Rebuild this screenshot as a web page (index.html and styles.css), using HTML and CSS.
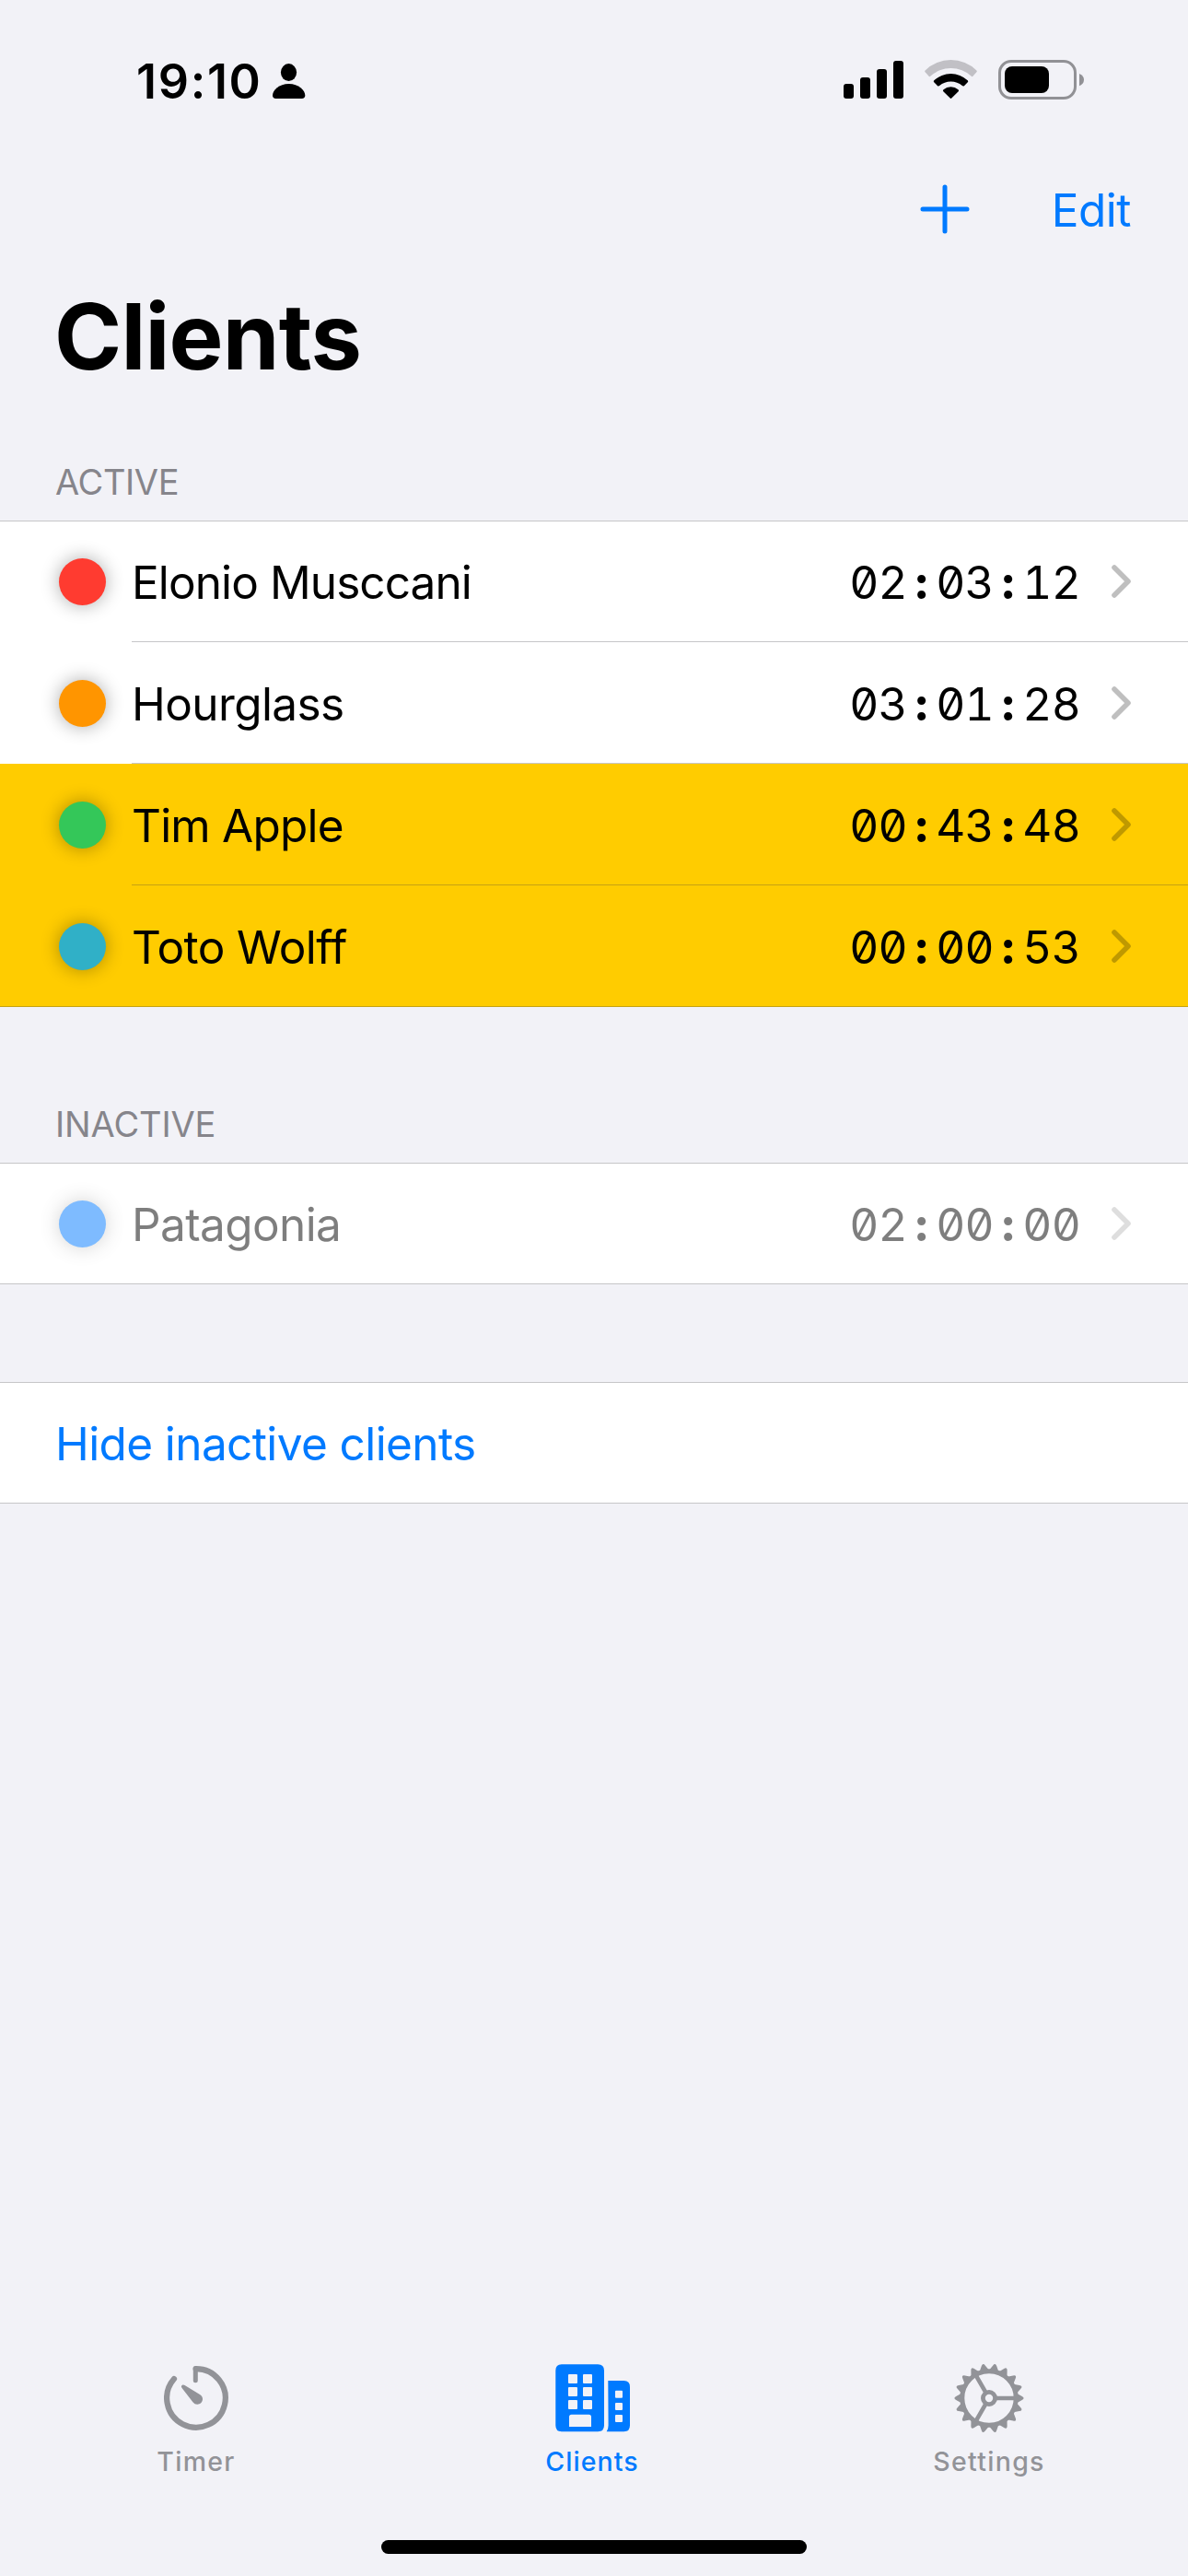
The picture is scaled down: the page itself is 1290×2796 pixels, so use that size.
FILE: index.html
```html
<!DOCTYPE html>
<html lang="en">
<head>
<meta charset="utf-8">
<title>Clients</title>
<link rel="stylesheet" href="styles.css">
</head>
<body>
<svg class="defs" aria-hidden="true">
  <symbol id="chevron" viewBox="0 0 21 36"><path d="M3 3 L18 18 L3 33" fill="none" stroke="currentColor" stroke-width="5.6" stroke-linecap="round" stroke-linejoin="round"/></symbol>
</svg>

<header class="status">
  <div class="status-left">
    <span class="clock">19:10</span>
    <svg class="person" width="36" height="39" viewBox="0 0 36 39"><ellipse cx="17.5" cy="9.6" rx="8.6" ry="9.5"/><path d="M3.6 38 C1.2 38 0 36.8 0 34.6 C0 29 7 22 17.6 22 C28.3 22 35.3 29 35.3 34.6 C35.3 36.8 34.1 38 31.7 38 Z"/></svg>
  </div>
  <div class="status-right">
    <svg width="65" height="43" viewBox="0 0 65 43"><rect x="0" y="26" width="11" height="16" rx="3"/><rect x="18" y="19" width="11" height="23" rx="3"/><rect x="36" y="10" width="11" height="32" rx="3"/><rect x="54" y="1" width="11" height="41" rx="3"/></svg>
    <svg class="wifi" width="58" height="43" viewBox="0 0 58 43">
      <path fill="#c1c0c5" d="M.6 13.3 Q-.3 12.3 .6 11.4 A40 40 0 0 1 56.4 11.4 Q57.3 12.3 56.4 13.3 L52.6 17.6 Q51.8 18.6 50.8 17.7 A33 33 0 0 0 6.2 17.7 Q5.2 18.6 4.4 17.6 Z"/>
      <path d="M10.2 24.2 Q9.3 23.2 10.3 22.3 A26.5 26.5 0 0 1 46.7 22.3 Q47.7 23.2 46.8 24.2 L42.9 28.2 Q41.9 29 40.9 28.1 A19 19 0 0 0 16.1 28.1 Q15.1 29 14.1 28.2 Z"/>
      <path d="M20.3 34.2 Q19.4 33.2 20.5 32.2 A12.5 12.5 0 0 1 36.5 32.2 Q37.6 33.2 36.7 34.2 L29.3 41.6 Q28.5 42.4 27.7 41.6 Z"/>
    </svg>
    <svg class="battery" width="94" height="43" viewBox="0 0 94 43"><rect x="1.5" y="1.5" width="82" height="40" rx="12.5" fill="none" stroke="#919195" stroke-width="3"/><rect x="7" y="7" width="48" height="29" rx="8"/><path fill="#919195" d="M88 15 Q93 17 93 21.6 Q93 26.2 88 28.2 Z"/></svg>
  </div>
</header>

<nav class="navbar">
  <svg width="54" height="54" viewBox="0 0 54 54"><path d="M27 3 V51 M3 27 H51" stroke="currentColor" stroke-width="5" stroke-linecap="round"/></svg>
  <span class="edit">Edit</span>
</nav>

<h1 class="title">Clients</h1>

<main class="content">
  <h2 class="heading heading-active">ACTIVE</h2>
  <section class="group">
    <div class="row"><i class="dot red"></i><div class="cell"><span class="name tight">Elonio Musccani</span><span class="time">02<b>:</b>03<b>:</b>12</span><svg class="chevron"><use href="#chevron"/></svg></div></div>
    <div class="row"><i class="dot orange"></i><div class="cell"><span class="name">Hourglass</span><span class="time">03<b>:</b>01<b>:</b>28</span><svg class="chevron"><use href="#chevron"/></svg></div></div>
    <div class="row running"><i class="dot green"></i><div class="cell"><span class="name snug">Tim Apple</span><span class="time">00<b>:</b>43<b>:</b>48</span><svg class="chevron"><use href="#chevron"/></svg></div></div>
    <div class="row running"><i class="dot teal"></i><div class="cell"><span class="name snug wolff">Toto Wolff</span><span class="time">00<b>:</b>00<b>:</b>53</span><svg class="chevron"><use href="#chevron"/></svg></div></div>
  </section>

  <h2 class="heading">INACTIVE</h2>
  <section class="group">
    <div class="row"><i class="dot blue"></i><div class="cell faded"><span class="name">Patagonia</span><span class="time">02<b>:</b>00<b>:</b>00</span><svg class="chevron"><use href="#chevron"/></svg></div></div>
  </section>

  <section class="group group-action">
    <div class="row action"><span class="name">Hide inactive clients</span></div>
  </section>
</main>

<nav class="tabs">
  <div class="tab">
    <svg width="70" height="76" viewBox="0 -3 70 76" fill="none" stroke="currentColor" stroke-linecap="round" stroke-linejoin="round"><path stroke-width="6.2" d="M34.6 3.1 A31.8 31.8 0 1 1 11 14"/><path stroke-width="5" d="M34.3 2.7 V15.8"/><path fill="currentColor" stroke="none" d="M19.1 21.6 C20 20 21.5 20.2 22.6 20.9 L39 31.1 C42.8 33.4 42.8 37.6 40.4 40 C37.8 42.5 33.8 42.3 31.4 39.2 L19.6 23.9 C19 23.1 18.7 22.4 19.1 21.6 Z"/></svg>
    <span>Timer</span>
  </div>
  <div class="tab selected">
    <svg width="81" height="76" viewBox="0 -1 81 76" fill="currentColor" fill-rule="evenodd"><path d="M6.8 .3 H46.2 Q53 .3 53 7.1 V66.5 Q53 73.3 46.2 73.3 H6.8 Q.3 73.3 .3 66.5 V7.1 Q.3 .3 6.8 .3 Z M15 11 h8 q1 0 1 1 v8 q0 1 -1 1 h-8 q-1 0 -1 -1 v-8 q0 -1 1 -1 Z M31 11 h8 q1 0 1 1 v8 q0 1 -1 1 h-8 q-1 0 -1 -1 v-8 q0 -1 1 -1 Z M15 25 h8 q1 0 1 1 v8 q0 1 -1 1 h-8 q-1 0 -1 -1 v-8 q0 -1 1 -1 Z M31 25 h8 q1 0 1 1 v8 q0 1 -1 1 h-8 q-1 0 -1 -1 v-8 q0 -1 1 -1 Z M15 39 h8 q1 0 1 1 v8 q0 1 -1 1 h-8 q-1 0 -1 -1 v-8 q0 -1 1 -1 Z M31 39 h8 q1 0 1 1 v8 q0 1 -1 1 h-8 q-1 0 -1 -1 v-8 q0 -1 1 -1 Z M17.5 54.7 H36.5 Q39 54.7 39 57.2 V68 H15 V57.2 Q15 54.7 17.5 54.7 Z"/><path d="M57.3 18 H74.5 Q81 18 81 24.8 V66.5 Q81 73.3 74.5 73.3 H55.7 Q57.6 70.5 57.6 66.5 Z M66 28.7 h6 q1 0 1 1 v6 q0 1 -1 1 h-6 q-1 0 -1 -1 v-6 q0 -1 1 -1 Z M66 42 h6 q1 0 1 1 v6 q0 1 -1 1 h-6 q-1 0 -1 -1 v-6 q0 -1 1 -1 Z M66 55 h6 q1 0 1 1 v6 q0 1 -1 1 h-6 q-1 0 -1 -1 v-6 q0 -1 1 -1 Z"/></svg>
    <span>Clients</span>
  </div>
  <div class="tab">
    <svg width="76" height="76" viewBox="-38 -38 76 76" fill="none" stroke="currentColor">
      <defs><path id="teeth" fill="currentColor" stroke="none" d="M30 -5.2 L35.8 -2 Q37.6 -1.2 37.6 0 Q37.6 1.2 35.8 2 L30 5.2 Z M-30 -5.2 L-35.8 -2 Q-37.6 -1.2 -37.6 0 Q-37.6 1.2 -35.8 2 L-30 5.2 Z"/></defs>
      <use href="#teeth"/><use href="#teeth" transform="rotate(20)"/><use href="#teeth" transform="rotate(40)"/><use href="#teeth" transform="rotate(60)"/><use href="#teeth" transform="rotate(80)"/><use href="#teeth" transform="rotate(100)"/><use href="#teeth" transform="rotate(120)"/><use href="#teeth" transform="rotate(140)"/><use href="#teeth" transform="rotate(160)"/>
      <circle r="29.2" stroke-width="5"/><circle r="6.6" stroke-width="4.8"/>
      <path stroke-width="4.6" d="M8 0 H29 M-4 -6.9 L-14.5 -25.1 M-4 6.9 L-14.5 25.1"/>
    </svg>
    <span>Settings</span>
  </div>
</nav>
<div class="home-indicator"></div>
</body>
</html>
```
FILE: styles.css
```css
* { box-sizing: border-box; }
body {
  margin: 0;
  width: 1290px;
  height: 2796px;
  display: flex;
  flex-direction: column;
  background: #f2f2f7;
  color: #000;
  font-family: Inter, sans-serif;
  font-size: 49.5px;
  line-height: 60px;
  overflow: hidden;
}
svg { display: block; flex: none; }
.defs { position: absolute; width: 0; height: 0; }

.status {
  height: 180px;
  padding: 65px 113px 0 148px;
  display: flex;
  justify-content: space-between;
}
.status-left, .status-right { display: flex; align-items: flex-start; }
.clock { font-size: 52px; font-weight: 600; letter-spacing: 1.7px; line-height: 48px; width: 148px; }
.person { margin-top: 4px; }
.wifi { margin-left: 23px; }
.battery { margin-left: 22px; margin-right: -1px; }

.navbar {
  height: 120px;
  padding: 20px 62px 0 0;
  display: flex;
  justify-content: flex-end;
  color: #007aff;
}
.edit { margin-left: 89px; letter-spacing: -.5px; margin-top: -2px; }

.title { margin: 0; padding: 5px 59px 0; height: 184px; font-size: 99px; line-height: 120px; letter-spacing: -.77px; font-weight: 700; }

.content { flex: 1; }
.heading { margin: 0; padding: 14px 60px 0; height: 81px; font-size: 38px; line-height: 50px; font-weight: 400; letter-spacing: -.12px; color: #86858b; }
.heading-active { letter-spacing: -.4px; }
.group { border-top: 1px solid #c6c6c8; margin-bottom: 88px; }
.group + .group-action { margin-top: 106px; }
.row { display: flex; align-items: stretch; height: 132px; padding-left: 64px; background: #fff; }
.row:first-child { height: 131px; }
.row:last-child { border-bottom: 1px solid #c6c6c8; }
.running, .row.running:last-child { background: #fc0; border-color: #c6a213; }
.dot { width: 51px; height: 51px; margin: 41px 28px 0 0; border-radius: 50%; box-shadow: 0 0 20px rgba(0, 0, 0, .33); flex: none; }
.row:first-child .dot { margin-top: 40px; }
.red { background: #ff3b30; }
.orange { background: #ff9500; }
.green { background: #34c759; }
.teal { background: #30b0c7; }
.blue { background: #007aff; opacity: .5; }
.cell { flex: 1; display: flex; align-items: center; padding: 2px 62px 0 0; border-bottom: 1px solid #c6c6c8; }
.row:first-child .cell { padding-top: 1px; }
.running .cell { border-color: #c6a213; }
.row:last-child .cell { border-bottom: 0; }
.name { letter-spacing: -.6px; }
.name.snug { letter-spacing: -.79px; }
.name.tight { letter-spacing: -.9px; }
.name.wolff { letter-spacing: -.6px; }
.time { margin-left: auto; margin-right: 34px; display: flex; font-feature-settings: "tnum", "zero", "calt" 0; letter-spacing: -.75px; }
.time b { width: 31.33px; text-align: center; letter-spacing: 0; font-weight: 800; }
.chevron { width: 21px; height: 36px; color: rgba(0, 0, 0, .25); position: relative; top: -1px; }
.faded .name, .faded .time, .faded .chevron { opacity: .5; }
.action { padding-left: 60px; align-items: center; color: #007aff; padding-top: 1px; }

.tabs { display: grid; grid-template-columns: 426px 434px 428px; height: 192px; color: #929398; }
.tab { display: flex; flex-direction: column; align-items: center; gap: 14px; font-size: 28.5px; font-weight: 500; line-height: 34px; letter-spacing: 1.3px; }
.tab.selected { color: #007aff; letter-spacing: 1.07px; }
.home-indicator { width: 462px; height: 15px; margin: 0 auto 24px; border-radius: 8px; background: #000; flex: none; }
```
